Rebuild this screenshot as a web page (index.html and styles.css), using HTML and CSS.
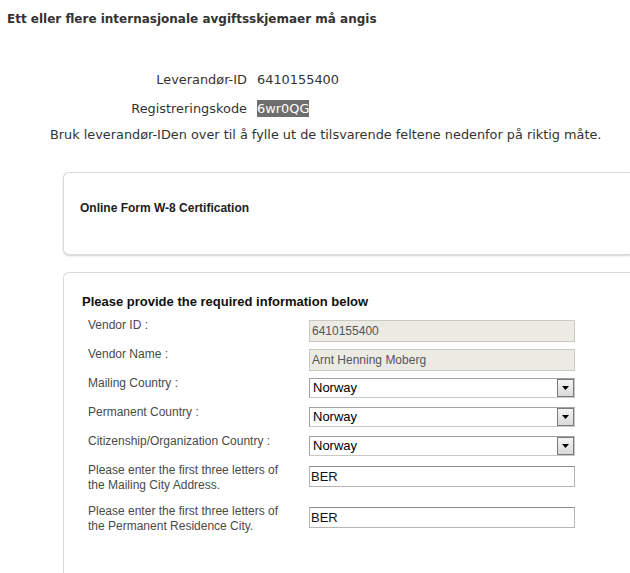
FILE: index.html
```html
<!DOCTYPE html>
<html lang="no">
<head>
<meta charset="utf-8">
<title>Avgiftsskjema</title>
<link rel="stylesheet" href="styles.css">
</head>
<body>
<h1 class="title">Ett eller flere internasjonale avgiftsskjemaer må angis</h1>
<div class="ids">
  <div class="ids-label">Leverandør-ID</div>
  <div class="ids-value">6410155400</div>
  <div class="ids-label">Registreringskode</div>
  <div class="ids-value"><span class="hl">6wr0QG</span></div>
</div>
<p class="note">Bruk leverandør-IDen over til å fylle ut de tilsvarende feltene nedenfor på riktig måte.</p>
<div class="cards">
  <section class="card card-top">
    <h2 class="card-title">Online Form W-8 Certification</h2>
  </section>
  <section class="card card-form">
    <h3 class="form-title">Please provide the required information below</h3>
    <div class="rows">
      <div class="row">
        <div class="label">Vendor ID :</div>
        <input class="field disabled" type="text" value="6410155400" readonly>
      </div>
      <div class="row">
        <div class="label">Vendor Name :</div>
        <input class="field disabled" type="text" value="Arnt Henning Moberg" readonly>
      </div>
      <div class="row">
        <div class="label">Mailing Country :</div>
        <div class="select"><span class="select-text">Norway</span><span class="arrow"><svg width="7" height="4" viewBox="0 0 7 4"><path d="M0 0h7L3.5 4z" fill="#000"/></svg></span></div>
      </div>
      <div class="row">
        <div class="label">Permanent Country :</div>
        <div class="select"><span class="select-text">Norway</span><span class="arrow"><svg width="7" height="4" viewBox="0 0 7 4"><path d="M0 0h7L3.5 4z" fill="#000"/></svg></span></div>
      </div>
      <div class="row">
        <div class="label">Citizenship/Organization Country :</div>
        <div class="select"><span class="select-text">Norway</span><span class="arrow"><svg width="7" height="4" viewBox="0 0 7 4"><path d="M0 0h7L3.5 4z" fill="#000"/></svg></span></div>
      </div>
      <div class="row tall">
        <div class="label">Please enter the first three letters of<br>the Mailing City Address.</div>
        <input class="field text" type="text" value="BER" readonly>
      </div>
      <div class="row tall">
        <div class="label">Please enter the first three letters of<br>the Permanent Residence City.</div>
        <input class="field text" type="text" value="BER" readonly>
      </div>
    </div>
  </section>
</div>
</body>
</html>
```
FILE: styles.css
```css
html, body {
  margin: 0;
  padding: 0;
  overflow: hidden;
  background: #fff;
}
body {
  font-family: "DejaVu Sans", Verdana, sans-serif;
  color: #333;
  width: 630px;
}
.title {
  margin: 0;
  padding: 11px 0 0 7px;
  font-size: 12px;
  line-height: 16px;
  font-weight: bold;
  color: #333;
}
.ids {
  display: grid;
  grid-template-columns: 247px auto;
  column-gap: 10px;
  row-gap: 13px;
  margin-top: 45px;
  font-size: 12.9px;
  line-height: 16px;
}
.ids-label {
  text-align: right;
}
.hl {
  background: #6e6e6e;
  color: #fff;
  padding: 1px 0;
}
.note {
  margin: 10px 0 0 0;
  padding-left: 50px;
  font-size: 12.85px;
  line-height: 16px;
  white-space: nowrap;
}
.cards {
  margin: 29px 0 0 63px;
  width: 567px;
}
.card {
  border: 1px solid #d9d9d9;
  border-right: 0;
  border-radius: 6px 0 0 6px;
  box-shadow: 0 1px 2px rgba(0, 0, 0, 0.18);
  background: #fff;
  box-sizing: border-box;
  font-family: "Liberation Sans", Arial, sans-serif;
}
.card-top {
  height: 83px;
  padding: 27px 0 0 16px;
}
.card-title {
  margin: 0;
  font-size: 12px;
  line-height: 16px;
  font-weight: bold;
  color: #222;
}
.card-form {
  margin-top: 17px;
  height: 301px;
  border-bottom: 0;
  border-radius: 6px 0 0 0;
  box-shadow: none;
  padding: 21px 0 0 18px;
}
.form-title {
  margin: 0;
  font-size: 13px;
  line-height: 16px;
  font-weight: bold;
  color: #111;
}
.rows {
  margin-top: 7px;
  padding-left: 6px;
}
.row {
  display: flex;
  align-items: flex-start;
  height: 29px;
}
.row.tall {
  height: 41px;
}
.label {
  width: 221px;
  flex: none;
  font-size: 12px;
  line-height: 15px;
  color: #4a4a4a;
  margin-top: 1px;
}
.field {
  box-sizing: border-box;
  width: 266px;
  margin: 3px 0 0 0;
  padding: 0 2px;
  font-family: "Liberation Sans", Arial, sans-serif;
  outline: none;
}
.field.disabled {
  height: 22px;
  background: #ebebe4;
  border: 1px solid #c9c9c2;
  font-size: 12px;
  color: #555;
  -webkit-text-fill-color: #555;
}
.field.text {
  height: 21px;
  margin-top: 4px;
  background: #fff;
  border: 1px solid #b5b5b5;
  border-top-color: #8e8e8e;
  font-size: 13px;
  color: #111;
  padding-left: 1px;
}
.select {
  box-sizing: border-box;
  width: 266px;
  height: 20px;
  margin-top: 3px;
  display: flex;
  align-items: stretch;
  border: 1px solid #a0a0a0;
  border-right-color: #c8c8c8;
  border-bottom-color: #c8c8c8;
  background: #fff;
  font-family: "Liberation Sans", Arial, sans-serif;
}
.select-text {
  flex: 1;
  font-size: 13px;
  line-height: 18px;
  padding-left: 3px;
  color: #000;
}
.arrow {
  width: 15px;
  flex: none;
  display: flex;
  align-items: center;
  justify-content: center;
  border: 1px solid #7a7a7a;
  background: linear-gradient(#f4f4f4, #d9d9d9);
}
```
